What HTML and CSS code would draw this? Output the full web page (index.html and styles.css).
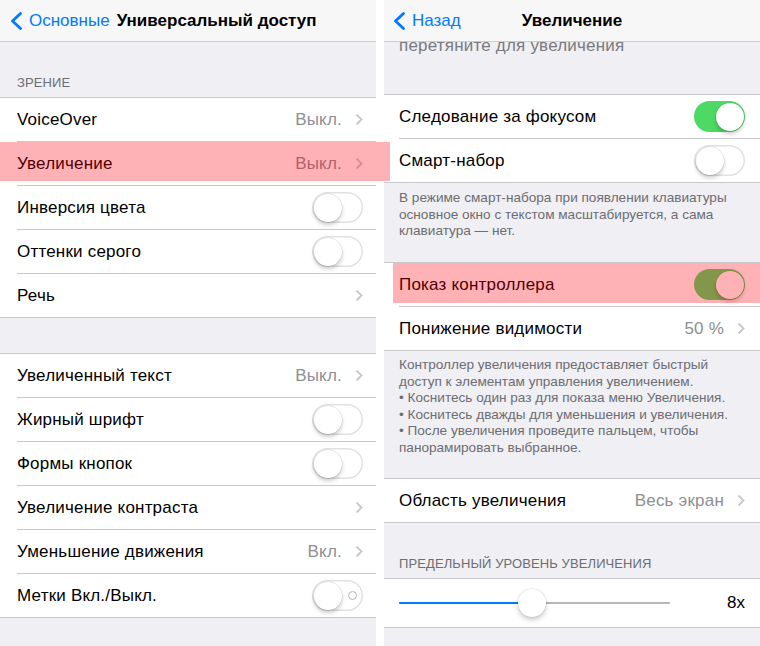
FILE: index.html
```html
<!DOCTYPE html>
<html lang="ru">
<head>
<meta charset="utf-8">
<title>Универсальный доступ</title>
<link rel="stylesheet" href="styles.css">
</head>
<body>
<div class="screen">
  <section class="panel panel-left">
    <header class="nav nav-left">
      <div class="back">
        <svg class="back-chev" viewBox="0 0 12 18" width="12" height="18"><polyline points="10.5,1.5 2.5,9 10.5,16.5" fill="none" stroke="#007aff" stroke-width="2.8" stroke-linecap="round" stroke-linejoin="round"/></svg>
        <span>Основные</span>
      </div>
      <div class="nav-title">Универсальный доступ</div>
    </header>
    <div class="content">
      <div class="header">ЗРЕНИЕ</div>
      <div class="group">
        <div class="row"><div class="row-inner"><span class="label">VoiceOver</span><span class="value">Выкл.</span><svg class="chev" viewBox="0 0 8 13" width="8" height="13"><polyline points="1.5,1.5 6.5,6.5 1.5,11.5" fill="none" stroke="#c7c7cc" stroke-width="1.8"/></svg></div></div>
        <div class="row"><div class="row-inner"><span class="label">Увеличение</span><span class="value">Выкл.</span><svg class="chev" viewBox="0 0 8 13" width="8" height="13"><polyline points="1.5,1.5 6.5,6.5 1.5,11.5" fill="none" stroke="#c7c7cc" stroke-width="1.8"/></svg></div></div>
        <div class="row"><div class="row-inner"><span class="label">Инверсия цвета</span><span class="switch"></span></div></div>
        <div class="row"><div class="row-inner"><span class="label">Оттенки серого</span><span class="switch"></span></div></div>
        <div class="row"><div class="row-inner"><span class="label">Речь</span><svg class="chev" viewBox="0 0 8 13" width="8" height="13"><polyline points="1.5,1.5 6.5,6.5 1.5,11.5" fill="none" stroke="#c7c7cc" stroke-width="1.8"/></svg></div></div>
      </div>
      <div class="group group-spaced">
        <div class="row"><div class="row-inner"><span class="label">Увеличенный текст</span><span class="value">Выкл.</span><svg class="chev" viewBox="0 0 8 13" width="8" height="13"><polyline points="1.5,1.5 6.5,6.5 1.5,11.5" fill="none" stroke="#c7c7cc" stroke-width="1.8"/></svg></div></div>
        <div class="row"><div class="row-inner"><span class="label">Жирный шрифт</span><span class="switch"></span></div></div>
        <div class="row"><div class="row-inner"><span class="label">Формы кнопок</span><span class="switch"></span></div></div>
        <div class="row"><div class="row-inner"><span class="label">Увеличение контраста</span><svg class="chev" viewBox="0 0 8 13" width="8" height="13"><polyline points="1.5,1.5 6.5,6.5 1.5,11.5" fill="none" stroke="#c7c7cc" stroke-width="1.8"/></svg></div></div>
        <div class="row"><div class="row-inner"><span class="label">Уменьшение движения</span><span class="value">Вкл.</span><svg class="chev" viewBox="0 0 8 13" width="8" height="13"><polyline points="1.5,1.5 6.5,6.5 1.5,11.5" fill="none" stroke="#c7c7cc" stroke-width="1.8"/></svg></div></div>
        <div class="row"><div class="row-inner"><span class="label">Метки Вкл./Выкл.</span><span class="switch"><span class="mark"></span></span></div></div>
      </div>
    </div>
  </section>

  <section class="panel panel-right">
    <header class="nav nav-center">
      <div class="back back-right">
        <svg class="back-chev" viewBox="0 0 12 18" width="12" height="18"><polyline points="10.5,1.5 2.5,9 10.5,16.5" fill="none" stroke="#007aff" stroke-width="2.8" stroke-linecap="round" stroke-linejoin="round"/></svg>
        <span>Назад</span>
      </div>
      <div class="nav-title nav-title-center">Увеличение</div>
      <div></div>
    </header>
    <div class="content">
      <div class="footer footer-cut">перетяните для увеличения</div>
      <div class="group">
        <div class="row"><div class="row-inner"><span class="label">Следование за фокусом</span><span class="switch on"></span></div></div>
        <div class="row"><div class="row-inner"><span class="label">Смарт-набор</span><span class="switch"></span></div></div>
      </div>
      <div class="footer footer-a">В режиме смарт-набора при появлении клавиатуры<br>основное окно с текстом масштабируется, а сама<br>клавиатура — нет.</div>
      <div class="group">
        <div class="row"><div class="row-inner"><span class="label">Показ контроллера</span><span class="switch on"></span></div></div>
        <div class="row"><div class="row-inner"><span class="label">Понижение видимости</span><span class="value">50 %</span><svg class="chev" viewBox="0 0 8 13" width="8" height="13"><polyline points="1.5,1.5 6.5,6.5 1.5,11.5" fill="none" stroke="#c7c7cc" stroke-width="1.8"/></svg></div></div>
      </div>
      <div class="footer footer-b">Контроллер увеличения предоставляет быстрый<br>доступ к элементам управления увеличением.<br>• Коснитесь один раз для показа меню Увеличения.<br>• Коснитесь дважды для уменьшения и увеличения.<br>• После увеличения проведите пальцем, чтобы<br>панорамировать выбранное.</div>
      <div class="group">
        <div class="row"><div class="row-inner"><span class="label">Область увеличения</span><span class="value">Весь экран</span><svg class="chev" viewBox="0 0 8 13" width="8" height="13"><polyline points="1.5,1.5 6.5,6.5 1.5,11.5" fill="none" stroke="#c7c7cc" stroke-width="1.8"/></svg></div></div>
      </div>
      <div class="header header-right">ПРЕДЕЛЬНЫЙ УРОВЕНЬ УВЕЛИЧЕНИЯ</div>
      <div class="group">
        <div class="slider-row">
          <div class="slider">
            <div class="slider-fill" style="width:133px"></div>
            <div class="slider-thumb"></div>
          </div>
          <span class="slider-value">8x</span>
        </div>
      </div>
    </div>
  </section>

  <div class="hl hl-left"></div>
  <div class="hl hl-right"></div>
</div>
</body>
</html>
```

FILE: styles.css
```css
* { box-sizing: border-box; }
html, body { margin: 0; padding: 0; background: #fff; }
body {
  font-family: "Liberation Sans", Arial, sans-serif;
  color: #000;
}

.screen {
  position: relative;
  display: flex;
  gap: 8px;
  width: 760px;
  height: 646px;
  overflow: hidden;
  background: #fff;
}

.panel {
  width: 376px;
  height: 646px;
  flex: none;
  display: flex;
  flex-direction: column;
  background: #efeff4;
  overflow: hidden;
}

.nav {
  position: relative;
  z-index: 1;
  flex: none;
  height: 42px;
  background: #f7f7f8;
  border-bottom: 1px solid #cdcdd1;
  display: flex;
  align-items: center;
  font-size: 17px;
}

.nav-left { padding-left: 10px; }

.nav-center {
  display: grid;
  grid-template-columns: 1fr auto 1fr;
  align-items: center;
}

.back {
  display: flex;
  align-items: center;
  gap: 7px;
  color: #007aff;
}

.back-right { padding-left: 9px; }

.back-chev { display: block; flex: none; }

.nav-title {
  font-weight: bold;
  margin-left: 7px;
}

.nav-title-center { margin-left: 0; }

.content {
  flex: 1;
  overflow: visible;
  min-height: 0;
}

.header {
  padding: 33px 0 6px 17px;
  font-size: 13px;
  line-height: 16px;
  color: #6d6d72;
  letter-spacing: 0.1px;
}

.header-right {
  padding: 33px 0 6px 15px;
}

.group {
  background: #fff;
  border-top: 1px solid #c8c7cc;
  border-bottom: 1px solid #c8c7cc;
}

.group-spaced { margin-top: 35px; }

.row {
  height: 44px;
  padding-left: 17px;
  display: flex;
}

.row:last-child { height: 43px; }

.row-inner {
  flex: 1;
  display: flex;
  align-items: center;
  border-bottom: 1px solid #c8c7cc;
  padding-right: 13px;
  font-size: 17px;
}

.row:last-child .row-inner { border-bottom: 0; }

.panel-right .row { padding-left: 15px; }
.panel-right .row-inner { padding-right: 15px; }

.label { flex: 1; white-space: nowrap; letter-spacing: 0.2px; }

.value { color: #8e8e93; white-space: nowrap; letter-spacing: 0.2px; }

.chev {
  display: block;
  flex: none;
  margin-left: 13px;
}

.switch {
  position: relative;
  flex: none;
  width: 51px;
  height: 31px;
  border-radius: 16px;
  background: #fff;
  box-shadow: inset 0 0 0 1.5px #e1e1e4;
}

.switch::after {
  content: "";
  position: absolute;
  top: 1.5px;
  left: 1.5px;
  width: 28px;
  height: 28px;
  border-radius: 50%;
  background: #fff;
  box-shadow: 0 3px 4px rgba(0, 0, 0, 0.2), 0 0 0 0.5px rgba(0, 0, 0, 0.14);
}

.switch.on {
  background: #4cd964;
  box-shadow: none;
}

.switch.on::after { left: 21.5px; }

.switch .mark {
  position: absolute;
  left: 36px;
  top: 11px;
  width: 9px;
  height: 9px;
  border: 1px solid #b3b3b3;
  border-radius: 50%;
}

.footer {
  padding: 7px 15px 22px;
  font-size: 13.6px;
  line-height: 16.5px;
  color: #6d6d72;
  white-space: nowrap;
}

.footer-cut {
  margin-top: -7px;
  padding-top: 0;
  padding-bottom: 37px;
  font-size: 17px;
  line-height: 22px;
  color: #7a7a7f;
  letter-spacing: 0.2px;
}

.footer-a { padding-top: 7px; padding-bottom: 22.5px; }
.footer-b { padding-top: 6px; padding-bottom: 22px; }

.slider-row {
  height: 48px;
  padding: 0 15px;
  display: flex;
  align-items: center;
}

.slider {
  position: relative;
  width: 271px;
  height: 2px;
  background: #b7b7b7;
  border-radius: 1px;
}

.slider-fill {
  height: 2px;
  background: #007aff;
  border-radius: 1px;
}

.slider-thumb {
  position: absolute;
  left: 119px;
  top: -13px;
  width: 28px;
  height: 28px;
  border-radius: 50%;
  background: #fff;
  box-shadow: 0 3px 5px rgba(0, 0, 0, 0.2), 0 0 0 0.5px rgba(0, 0, 0, 0.12);
}

.slider-value {
  margin-left: auto;
  font-size: 17px;
}

.hl {
  position: absolute;
  background: rgba(255, 0, 12, 0.3);
  pointer-events: none;
}

.hl-left { left: 0; top: 142px; width: 390px; height: 39px; }
.hl-right { left: 393px; top: 263px; width: 367px; height: 40px; }
```
